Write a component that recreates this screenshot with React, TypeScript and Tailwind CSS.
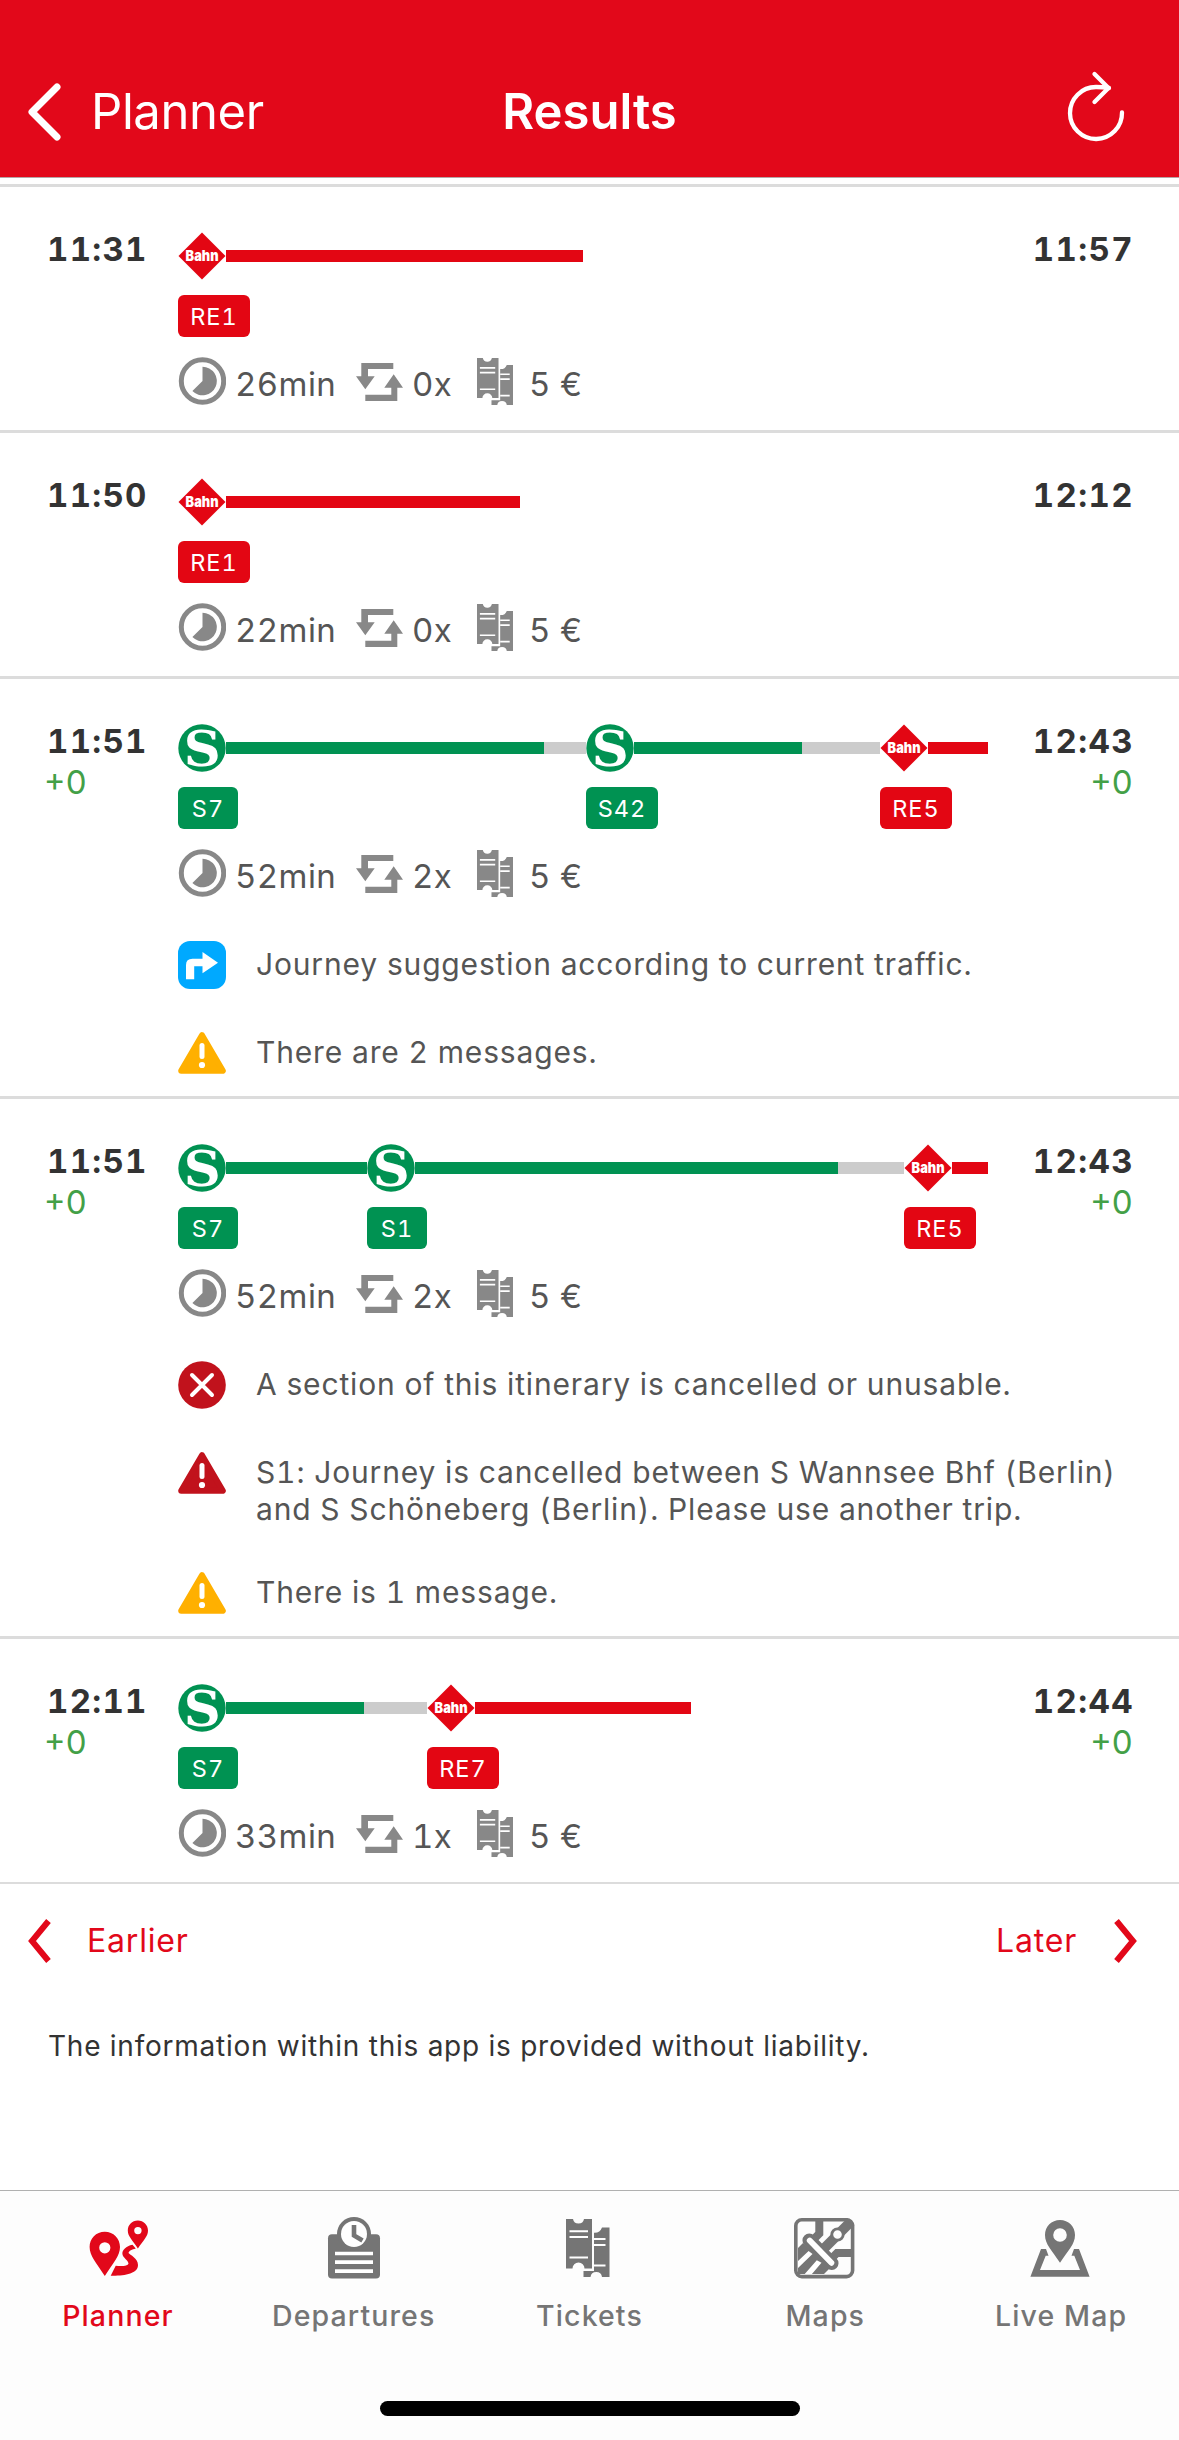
import React from "react";

type Line = { name: string; type: "sbahn" | "regional"; ride: number; wait?: number };
type Message = { type: "info" | "warning" | "alert" | "cancelled"; text: string };
type Journey = {
  departure: string;
  arrival: string;
  delay?: string;
  duration: string;
  changes: string;
  price: string;
  lines: Line[];
  messages?: Message[];
};

const journeys: Journey[] = [
  {
    departure: "11:31",
    arrival: "11:57",
    duration: "26min",
    changes: "0x",
    price: "5 €",
    lines: [{ name: "RE1", type: "regional", ride: 357 }],
  },
  {
    departure: "11:50",
    arrival: "12:12",
    duration: "22min",
    changes: "0x",
    price: "5 €",
    lines: [{ name: "RE1", type: "regional", ride: 294 }],
  },
  {
    departure: "11:51",
    arrival: "12:43",
    delay: "+0",
    duration: "52min",
    changes: "2x",
    price: "5 €",
    lines: [
      { name: "S7", type: "sbahn", ride: 318, wait: 42 },
      { name: "S42", type: "sbahn", ride: 168, wait: 78 },
      { name: "RE5", type: "regional", ride: 60 },
    ],
    messages: [
      { type: "info", text: "Journey suggestion according to current traffic." },
      { type: "warning", text: "There are 2 messages." },
    ],
  },
  {
    departure: "11:51",
    arrival: "12:43",
    delay: "+0",
    duration: "52min",
    changes: "2x",
    price: "5 €",
    lines: [
      { name: "S7", type: "sbahn", ride: 141 },
      { name: "S1", type: "sbahn", ride: 423, wait: 66 },
      { name: "RE5", type: "regional", ride: 36 },
    ],
    messages: [
      { type: "cancelled", text: "A section of this itinerary is cancelled or unusable." },
      {
        type: "alert",
        text: "S1: Journey is cancelled between S Wannsee Bhf (Berlin) and S Schöneberg (Berlin). Please use another trip.",
      },
      { type: "warning", text: "There is 1 message." },
    ],
  },
  {
    departure: "12:11",
    arrival: "12:44",
    delay: "+0",
    duration: "33min",
    changes: "1x",
    price: "5 €",
    lines: [
      { name: "S7", type: "sbahn", ride: 138, wait: 63 },
      { name: "RE7", type: "regional", ride: 216 },
    ],
  },
];

const SBahnLogo = () => (
  <svg viewBox="0 0 48 48" className="w-12 h-12 shrink-0 overflow-visible">
    <circle cx="24" cy="24" r="23.7" fill="#009252" />
    <text
      x="5.8"
      y="42.2"
      fontFamily="'DejaVu Serif', serif"
      fontWeight="700"
      fontSize="48"
      textLength="37"
      lengthAdjust="spacingAndGlyphs"
      fill="#fff"
    >
      S
    </text>
  </svg>
);

const BahnLogo = () => (
  <svg viewBox="0 0 48 48" className="w-12 h-12 shrink-0">
    <path d="M24 .5 47.5 24 24 47.5.5 24Z" fill="#e30613" />
    <text
      x="7.6"
      y="29"
      fontFamily="Inter, sans-serif"
      fontWeight="900"
      fontSize="15"
      textLength="33"
      lengthAdjust="spacingAndGlyphs"
      fill="#fff"
    >
      Bahn
    </text>
  </svg>
);

const DurationIcon = () => (
  <svg viewBox="0 0 48 48" className="w-12 h-12 shrink-0">
    <circle cx="24.5" cy="24" r="21.2" fill="none" stroke="#888" strokeWidth="5" />
    <path d="M24.5 24V9.7A14.3 14.3 0 1 1 14.4 34.1Z" fill="#888" />
  </svg>
);

const ChangesIcon = () => (
  <svg viewBox="0 0 47 38" className="w-[47px] h-[38px] shrink-0" fill="#888">
    <path d="M5.3 0H37.3V6H12V13.3H18.7L9.3 26.3 0 13.3H5.3Z" />
    <path d="M9.3 38H41.3V24.7H47L37.7 11.3 28.3 24.7H35.3V31.7H9.3Z" />
  </svg>
);

const TicketIcon = ({ className }: { className: string }) => (
  <svg viewBox="9 3 43.5 58" preserveAspectRatio="none" className={className} fill="currentColor">
    <path d="M9 3H16A5.6 5.6 0 0 0 27 3H35V52.5H27.5A6 6 0 0 0 15.5 52.5H9Z" />
    <path d="M37 16.7A8 8 0 0 0 45 11.5H52.5V61H45A5.8 5.8 0 0 0 33.5 61H26.5V55H37Z" />
    <path
      d="M12.5 15.2H31M12.5 21H31M12.5 41.5H31M37 23H48.5M37 29H48.5M37 49.5H48.5"
      stroke="#fff"
      strokeWidth="2"
    />
  </svg>
);

const Triangle = ({ color }: { color: string }) => (
  <svg viewBox="0 0 48 48" className="w-12 h-12 shrink-0">
    <path
      d="M24 6.2 44.8 41.8H3.2Z"
      fill={color}
      stroke={color}
      strokeWidth="6"
      strokeLinejoin="round"
    />
    <path d="M24 16.6V27.6" stroke="#fff" strokeWidth="5" strokeLinecap="round" />
    <circle cx="24" cy="36" r="3.1" fill="#fff" />
  </svg>
);

const MessageIcon = ({ type }: { type: Message["type"] }) => {
  if (type === "warning") return <Triangle color="#ffb000" />;
  if (type === "alert") return <Triangle color="#c1121c" />;
  if (type === "cancelled") {
    return (
      <svg viewBox="0 0 48 48" className="w-12 h-12 shrink-0">
        <circle cx="24" cy="24" r="23.8" fill="#c1121c" />
        <path d="M14 14 34 34M34 14 14 34" stroke="#fff" strokeWidth="4" strokeLinecap="round" />
      </svg>
    );
  }
  return (
    <svg viewBox="0 0 48 48" className="w-12 h-12 shrink-0">
      <rect width="48" height="48" rx="12" fill="#00a9ff" />
      <path
        d="M8 38.3V24Q8 17.7 14.5 17.7H24.5V11L40 21.7 24.5 32.3V25.3H16.2V38.3Z"
        fill="#fff"
      />
    </svg>
  );
};

const JourneyRow = ({ journey }: { journey: Journey }) => (
  <div className="flex border-t-3 border-[#dcdcdc] tabular-nums">
    <div className="w-[178px] pt-[42px] pl-[47px] shrink-0 text-[33px] leading-[41px]">
      <div className="font-bold tracking-[1.3px] text-[#333]">{journey.departure}</div>
      {journey.delay && <div className="-ml-[3px] text-[#43a047]">{journey.delay}</div>}
    </div>

    <div className="flex-1 min-w-0 pt-[45px]">
      <div className="flex justify-between">
        <div className="flex">
          {journey.lines.map((line) => (
            <div key={line.name}>
              <div className="flex items-center">
                {line.type === "sbahn" ? <SBahnLogo /> : <BahnLogo />}
                <div
                  className={line.type === "sbahn" ? "h-3 bg-[#009252]" : "h-3 bg-[#e30613]"}
                  style={{ width: line.ride }}
                />
                <div className="h-3 bg-[#ccc]" style={{ width: line.wait ?? 0 }} />
              </div>
              <div
                className={`mt-[15px] h-[42px] pt-px rounded-md flex items-center justify-center text-white text-[23.5px] tracking-[1px] ${
                  line.type === "sbahn" ? "bg-[#009252]" : "bg-[#e30613]"
                } ${line.name.length > 2 ? "w-[72px]" : "w-[60px]"}`}
              >
                {line.name}
              </div>
            </div>
          ))}
        </div>
        <div className="-mt-[3px] pr-[45px] text-right text-[33px] leading-[41px]">
          <div className="font-bold tracking-[1.4px] text-[#333]">{journey.arrival}</div>
          {journey.delay && <div className="pr-px text-[#43a047]">{journey.delay}</div>}
        </div>
      </div>

      <div className="flex mt-5 h-12 text-[33px] leading-[42px] tracking-[0.4px] text-[#555]">
        <div className="flex w-[178px]">
          <DurationIcon />
          <span className="pt-1.5 pl-[9px]">{journey.duration}</span>
        </div>
        <div className="flex w-[120px]">
          <div className="pt-1.5">
            <ChangesIcon />
          </div>
          <span className="pt-1.5 pl-[9px]">{journey.changes}</span>
        </div>
        <div className="flex items-center pl-px">
          <TicketIcon className="w-9 h-[47px] text-[#888]" />
          <span className="pt-1.5 pl-4">{journey.price}</span>
        </div>
      </div>

      {journey.messages ? (
        <div className="flex flex-col gap-10 mt-11 mb-[19px]">
          {journey.messages.map((message) => (
            <div key={message.text} className="flex">
              <MessageIcon type={message.type} />
              <p className="pt-[5px] pb-px pl-[30px] pr-10 text-[30px] leading-[37px] tracking-[0.84px] text-[#555]">
                {message.text}
              </p>
            </div>
          ))}
        </div>
      ) : (
        <div className="h-[25px]" />
      )}
    </div>
  </div>
);

const tabs = [
  {
    label: "Planner",
    icon: (
      <svg viewBox="0 0 64 64" className="w-16 h-16" fill="currentColor">
        <path
          fillRule="evenodd"
          d="M18.8 15.7C10 15.7 3.6 22.5 3.6 31 3.6 40 10.5 47 18.8 60 27 47 34 40 34 31 34 22.5 27.5 15.7 18.8 15.7ZM18.8 26.2A5.6 5.6 0 1 1 18.8 37.4 5.6 5.6 0 1 1 18.8 26.2Z"
        />
        <path
          fillRule="evenodd"
          d="M51.9 4.5C46 4.5 41.8 9 41.8 14.5 41.8 20.5 46.5 24 51.9 32.5 57.5 24 62 20.5 62 14.5 62 9 57.5 4.5 51.9 4.5ZM51.9 10.9A3.7 3.7 0 1 1 51.9 18.3 3.7 3.7 0 1 1 51.9 10.9Z"
        />
        <path d="M46.5 28.7C40 30 36 34 36.4 38 37 42 42 44 42.5 47.5 42 50 36 50.5 29.7 49.7L24.7 59.7C38 60 52 58 52 49 52 42 44 39 42.5 37 43 34.5 46 33.5 49.8 32.5Z" />
      </svg>
    ),
  },
  {
    label: "Departures",
    icon: (
      <svg viewBox="0 0 64 64" className="w-16 h-16" fill="currentColor">
        <rect x="6" y="18.3" width="52" height="44.3" rx="4" />
        <circle cx="32" cy="18" r="17" />
        <circle cx="32" cy="18" r="13" fill="#fff" />
        <path d="M32 9V19.5L40.5 24.5" fill="none" stroke="currentColor" strokeWidth="4.6" />
        <path d="M13 37.5H51M13 46.2H51M13 55.2H51" stroke="#fff" strokeWidth="3.7" />
      </svg>
    ),
  },
  {
    label: "Tickets",
    icon: (
      <div className="h-16 pt-[3px] pr-[3px]">
        <TicketIcon className="w-[43.5px] h-[58px]" />
      </div>
    ),
  },
  {
    label: "Maps",
    icon: (
      <svg viewBox="-1 -2 64 64" className="w-16 h-16" fill="none" stroke="currentColor">
        <path d="M9 25 4 30V56H30L36 50Z" fill="currentColor" stroke="none" />
        <path d="M25.3 3V15.5L17 24" strokeWidth="8" />
        <path d="M29 31.5 57 3.5" strokeWidth="10" />
        <path d="M58 35H43L37 41" strokeWidth="8" />
        <path d="M15.2 22.2 37.8 45.3" strokeWidth="13.5" strokeLinecap="round" />
        <path d="M15.7 22.5 37.4 44.8" stroke="#fff" strokeWidth="5.8" strokeLinecap="round" />
        <circle cx="43.5" cy="16.5" r="5.7" fill="#fff" strokeWidth="2.8" />
        <path d="M14.6 33 3.5 43.5V50.5L18.5 36ZM22.8 42.3 10.3 56.5H17.5L27.5 44.7Z" fill="#fff" stroke="none" />
        <rect x="1.8" y="1.8" width="56.8" height="56.8" rx="6" strokeWidth="3.6" />
      </svg>
    ),
  },
  {
    label: "Live Map",
    icon: (
      <svg viewBox="1 0 64 64" className="w-16 h-16" fill="currentColor">
        <path
          fillRule="evenodd"
          d="M32 4C23.5 4 17 10.5 17 19 17 28.5 24 34.5 32 46.7 40 34.5 47 28.5 47 19 47 10.5 40.5 4 32 4ZM32 12.2A6.8 6.8 0 1 1 32 25.8 6.8 6.8 0 1 1 32 12.2Z"
        />
        <path d="M13 33H18L20.5 39.7H17.7L12 54H52L46.3 39.7H43.5L46 33H51L61.6 60.7H2.4Z" />
      </svg>
    ),
  },
];

const App = () => {
  return (
    <div className="w-[1179px] h-[2440px] flex flex-col overflow-hidden bg-white font-['Inter',sans-serif]">
      <header className="h-[178px] shrink-0 border-b border-[#b5a5a6] bg-[#e2081a] text-white grid grid-cols-3 items-start pt-[79px] text-[49px] leading-[66px]">
        <div className="flex items-center pl-7">
          <svg viewBox="0 0 34 58" className="w-[34px] h-[58px]">
            <path
              d="M29 4 4 29 29 54"
              fill="none"
              stroke="#fff"
              strokeWidth="7"
              strokeLinecap="round"
              strokeLinejoin="round"
            />
          </svg>
          <span className="pl-[29px] tracking-[-0.4px]">Planner</span>
        </div>
        <h1 className="font-semibold text-center">Results</h1>
        <div className="flex justify-end pr-[51px] -mt-[9px]">
          <svg viewBox="0 0 64 76" className="w-16 h-[76px]" fill="none" stroke="#fff" strokeWidth="4.3">
            <path d="M58 42.5A26 26 0 1 1 32 17Q38 17 45 18" strokeLinecap="round" />
            <path d="M30.5 4 44.5 18 30.5 32" strokeLinecap="round" strokeLinejoin="round" />
          </svg>
        </div>
      </header>

      <main className="flex-1 pt-1.5">
        {journeys.map((journey, i) => (
          <JourneyRow key={i} journey={journey} />
        ))}
        <div className="border-t-2 border-[#dcdcdc] flex justify-between items-center h-[115px] px-7 text-[32px] tracking-[0.8px] text-[#e2081a]">
          <button className="flex items-center">
            <svg viewBox="0 0 24 44" className="w-6 h-11" fill="none" stroke="currentColor" strokeWidth="6">
              <path d="M20.5 2 4 22 20.5 42" />
            </svg>
            <span className="pl-[35px]">Earlier</span>
          </button>
          <button className="flex items-center pr-3.5">
            <span className="pr-9">Later</span>
            <svg viewBox="0 0 24 44" className="w-6 h-11" fill="none" stroke="currentColor" strokeWidth="6">
              <path d="M3.5 2 20 22 3.5 42" />
            </svg>
          </button>
        </div>
        <p className="pl-12 pt-[29px] text-[28px] leading-[40px] tracking-[0.75px] text-[#333]">
          The information within this app is provided without liability.
        </p>
      </main>

      <nav className="h-[250px] shrink-0 border-t border-[#b0b0b0] bg-[#fdfdfd]">
        <div className="grid grid-cols-5 pt-[25px] h-[210px]">
          {tabs.map((tab, i) => (
            <div
              key={tab.label}
              className={`flex flex-col items-center text-[28.5px] leading-[36px] font-medium tracking-[1.1px] ${
                i === 0 ? "text-[#e2081a]" : "text-[#757575]"
              }`}
            >
              {tab.icon}
              <span className="mt-[18px]">{tab.label}</span>
            </div>
          ))}
        </div>
        <div className="w-[420px] h-[15px] mx-auto rounded-full bg-black" />
      </nav>
    </div>
  );
};

export default App;
